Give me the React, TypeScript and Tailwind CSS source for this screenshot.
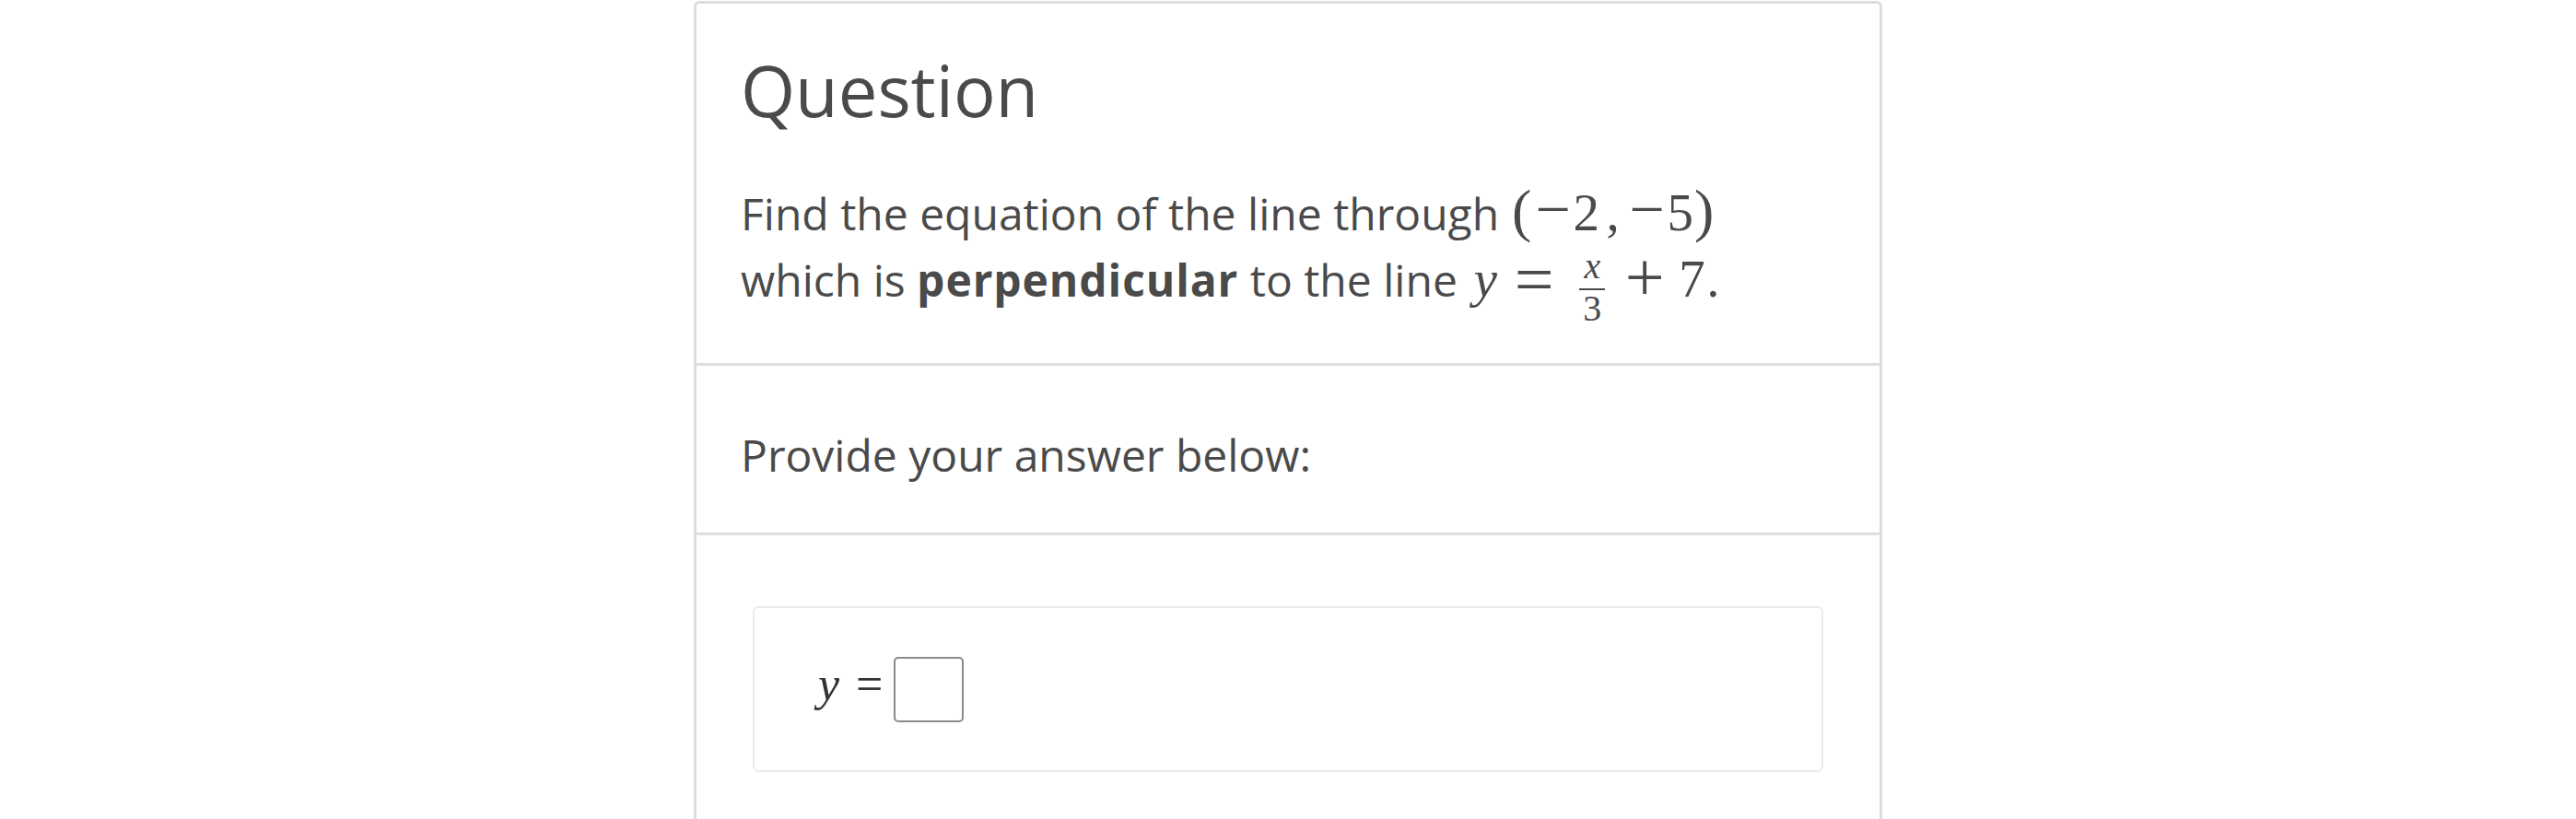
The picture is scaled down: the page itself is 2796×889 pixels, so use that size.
import React from "react";

const M = "font-['Liberation_Serif',serif]";

export default function App() {
  return (
    <div className="min-h-[889px] bg-white flex justify-center font-['Open_Sans',sans-serif] text-[#4a4a4a]">
      <div className="w-[1290px] mt-px h-[1000px] border-[3px] border-[#dddddd] rounded-[6px]">
        <section className="px-[48px] pt-[48px] pb-[39px] border-b-[3px] border-[#dddddd]">
          <h2 className="text-[76px] leading-[1.2] font-medium">Question</h2>
          <p className="mt-[53px] text-[48px] leading-[72px]">
            Find the equation of the line through{" "}
            <span className={`${M} text-[57px] leading-none whitespace-nowrap`}>
              <span className="inline-block w-[24px] text-center text-[64px] leading-[50px]">(</span>
              <span className="inline-block w-[44px] text-center text-[68px] leading-[50px]">−</span>
              <span className="inline-block w-[28px] text-center">2</span>
              <span className="inline-block w-[30px] text-center">,</span>
              <span className="inline-block w-[44px] text-center text-[68px] leading-[50px]">−</span>
              <span className="inline-block w-[28px] text-center">5</span>
              <span className="inline-block w-[24px] text-center text-[64px] leading-[50px]">)</span>
            </span>
            <br />
            which is <span className="font-bold tracking-[0.9px]">perpendicular</span> to the line{" "}
            <span className={`${M} text-[57px] leading-none whitespace-nowrap`}>
              <span className="inline-block w-[36px] text-center italic">y</span>
              <span className="inline-block w-[50px] ml-[10px] text-center text-[76px] leading-[50px] align-[-7px]">=</span>
              <span className="inline-flex flex-col items-center w-[44px] ml-[16px] align-[20px] text-[40px] leading-none">
                <span className="italic">x</span>
                <span className="block w-[28px] h-[2px] mt-[4px] bg-[#4a4a4a]"></span>
                <span>3</span>
              </span>
              <span className="inline-block w-[50px] ml-[10px] text-center text-[76px] leading-[50px] align-[-4px]">+</span>
              <span className="inline-block w-[28px] ml-[12px] text-center">7</span>
              <span className="inline-block w-[10px] ml-[2px] text-center">.</span>
            </span>
          </p>
        </section>
        <section className="px-[48px] pt-[61px] pb-[48px] border-b-[3px] border-[#dddddd]">
          <p className="text-[48px] leading-[72px]">Provide your answer below:</p>
        </section>
        <section className="px-[61px] pt-[77px] pb-[60px]">
          <div className="h-[180px] border-2 border-[#ebebeb] rounded-[6px] flex items-center pl-[69px]">
            <span className={`${M} text-[52px] leading-[52px] mb-[11px] text-[#333333] flex items-center`}>
              <span className="italic">y</span>
              <span className="ml-[18px]">=</span>
            </span>
            <span className="ml-[12px] w-[76px] h-[71px] border-2 border-[#8a8a8a] rounded-[5px]"></span>
          </div>
        </section>
      </div>
    </div>
  );
}
